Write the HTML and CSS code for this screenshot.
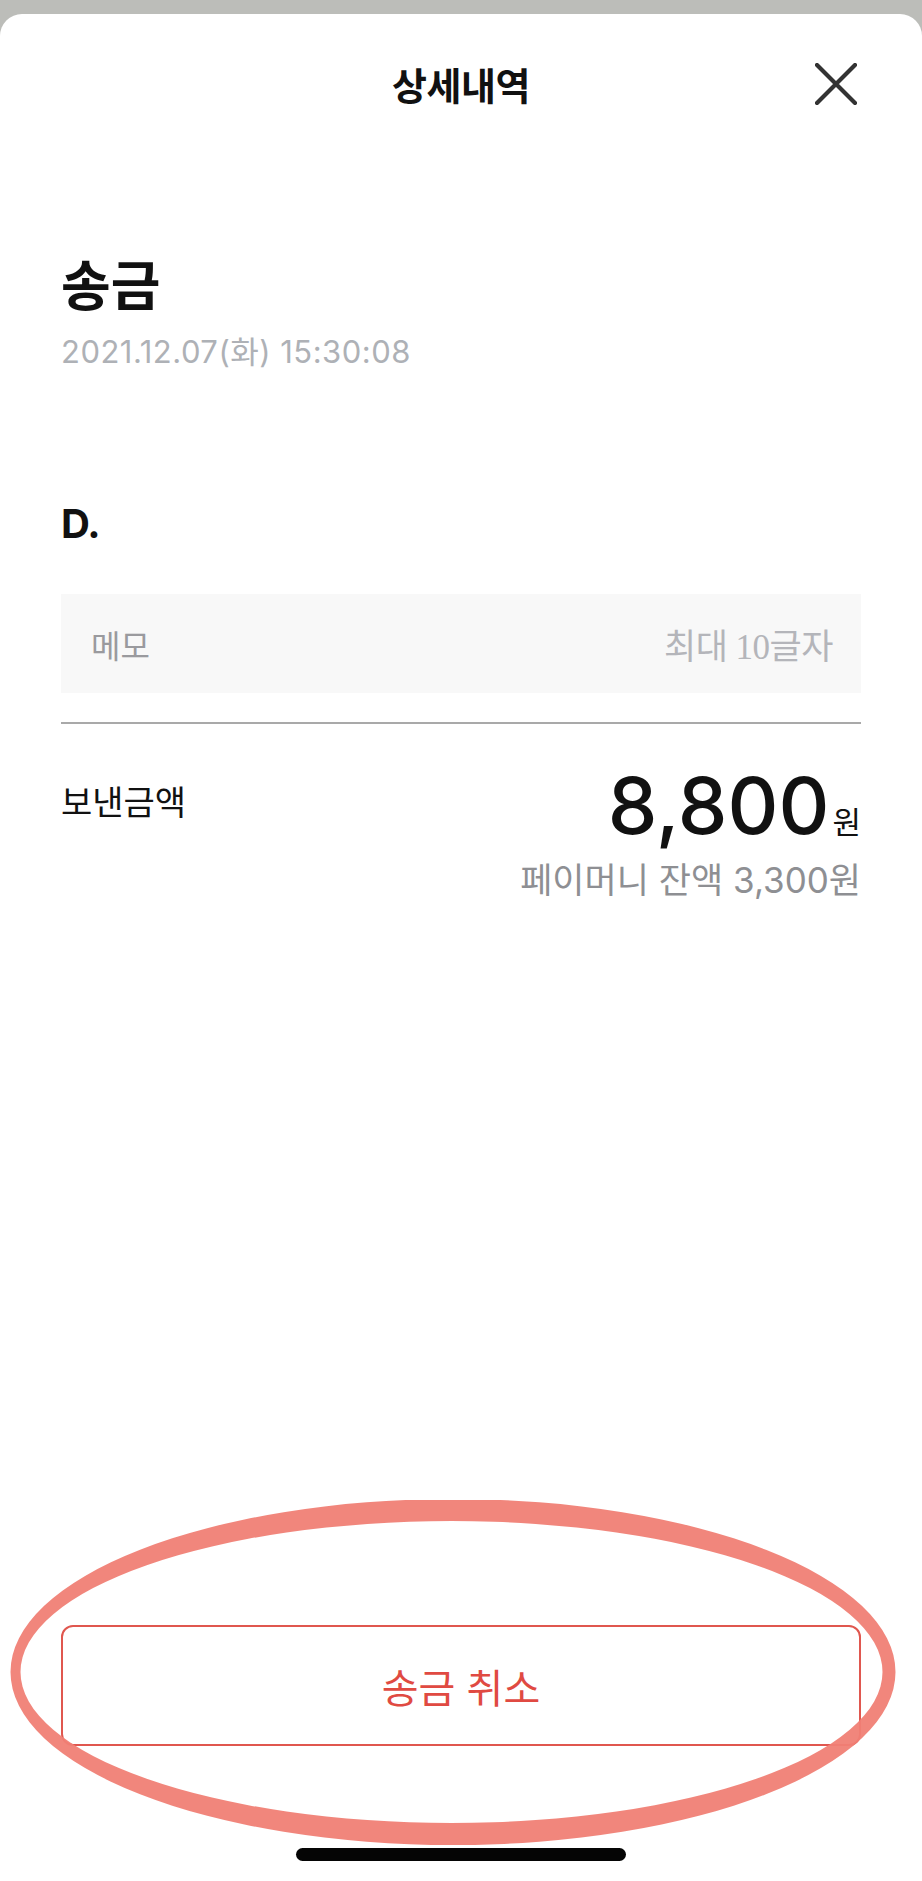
FILE: index.html
```html
<!DOCTYPE html>
<html lang="ko">
<head>
<meta charset="utf-8">
<title>상세내역</title>
<link rel="stylesheet" href="styles.css">
</head>
<body>
<div class="sheet">
  <header class="header">
    <span></span>
    <h1 class="title">상세내역</h1>
    <button class="close" aria-label="닫기">
      <svg width="42" height="42" viewBox="0 0 42 42"><path d="M2 2 L40 40 M40 2 L2 40" stroke="#333" stroke-width="4.2" stroke-linecap="round" fill="none"/></svg>
    </button>
  </header>

  <main class="content">
    <h2 class="kind">송금</h2>
    <div class="date">2021.12.07(화) 15:30:08</div>

    <div class="name">D.</div>

    <div class="memo">
      <span class="memo-label">메모</span>
      <span class="memo-hint">최대 10글자</span>
    </div>

    <div class="divider"></div>

    <div class="amount-row">
      <div class="amount-label">보낸금액</div>
      <div class="amount-right">
        <div class="amount"><span class="amount-num">8,800</span><span class="amount-unit">원</span></div>
        <div class="balance">페이머니 잔액 3,300원</div>
      </div>
    </div>
  </main>

  <div class="bottom">
    <button class="cancel">송금 취소</button>
    <div class="home-indicator"></div>
  </div>

  <svg class="annotation" width="922" height="360" viewBox="0 0 922 360">
    <path fill="#f07f75" fill-opacity="0.95" fill-rule="evenodd"
      d="M10.5 172 A442.5 173 0 1 0 895.5 172 A442.5 173 0 1 0 10.5 172 Z M20.5 172 A431 151 0 1 0 882.5 172 A431 151 0 1 0 20.5 172 Z"/>
  </svg>
</div>
</body>
</html>
```

FILE: styles.css
```css
html, body {
  margin: 0;
  padding: 0;
}
body {
  background: #bcbdb9;
  font-family: "Noto Sans CJK KR", "Noto Sans", sans-serif;
  color: #111;
}
.sheet {
  position: relative;
  margin-top: 14px;
  min-height: 1867px;
  background: #fff;
  border-radius: 22px 22px 0 0;
  display: flex;
  flex-direction: column;
  box-sizing: border-box;
  padding: 0 61px;
}
.header {
  height: 140px;
  display: grid;
  grid-template-columns: 1fr auto 1fr;
  align-items: center;
}
.title {
  margin: 0;
  font-size: 38px;
  font-weight: 700;
  line-height: 44px;
  letter-spacing: -0.5px;
  color: #111;
}
.close {
  justify-self: end;
  margin-right: 4px;
  width: 42px;
  height: 42px;
  padding: 0;
  border: 0;
  background: none;
  display: flex;
}
.content {
  display: flex;
  flex-direction: column;
}
.kind {
  margin: 98px 0 0;
  font-size: 54px;
  line-height: 62px;
  font-weight: 700;
  color: #111;
}
.date {
  margin-top: 19px;
  font-family: "Inter", "Noto Sans CJK KR", sans-serif;
  font-size: 31px;
  line-height: 38px;
  letter-spacing: 0.5px;
  color: #aeb1b6;
}
.name {
  margin-top: 130px;
  font-family: "Inter", "Noto Sans CJK KR", sans-serif;
  font-size: 40px;
  line-height: 46px;
  font-weight: 700;
  letter-spacing: -1px;
  color: #111;
}
.memo {
  margin-top: 47px;
  height: 99px;
  background: #f8f8f8;
  display: flex;
  align-items: center;
  justify-content: space-between;
  padding: 0 28px 0 30px;
}
.memo-label {
  font-size: 32px;
  color: #9a9a9e;
}
.memo-hint {
  font-family: "Liberation Serif", "Noto Sans CJK KR", serif;
  font-size: 35px;
  color: #b4b5ba;
  letter-spacing: -0.5px;
}
.divider {
  margin-top: 29px;
  height: 2px;
  background: #a9a9a9;
}
.amount-row {
  margin-top: 37px;
  display: flex;
  justify-content: space-between;
  align-items: flex-start;
}
.amount-label {
  margin-top: 20px;
  font-size: 34px;
  line-height: 40px;
  color: #111;
}
.amount-right {
  display: flex;
  flex-direction: column;
  align-items: flex-end;
}
.amount {
  font-family: "Inter", sans-serif;
  font-size: 79px;
  line-height: 88px;
  white-space: nowrap;
}
.amount-num {
  font-weight: 500;
  color: #111;
}
.amount-unit {
  margin-left: 3px;
  font-family: "Noto Sans CJK KR", sans-serif;
  font-size: 31px;
  line-height: 1;
  color: #111;
}
.balance {
  margin-top: 10px;
  font-family: "Inter", "Noto Sans CJK KR", sans-serif;
  font-size: 35px;
  line-height: 42px;
  color: #8e8f93;
}
.bottom {
  margin-top: auto;
  display: flex;
  flex-direction: column;
  align-items: center;
}
.cancel {
  width: 100%;
  height: 121px;
  border: 2px solid #e0574f;
  border-radius: 12px;
  background: #fff;
  color: #e04a42;
  font-family: "Noto Sans CJK KR", sans-serif;
  font-size: 40px;
  padding: 0;
}
.home-indicator {
  margin-top: 102px;
  margin-bottom: 20px;
  width: 330px;
  height: 13px;
  border-radius: 7px;
  background: #050505;
}
.annotation {
  position: absolute;
  left: 0;
  top: 1486px;
  pointer-events: none;
  filter: blur(0.6px);
}
```
